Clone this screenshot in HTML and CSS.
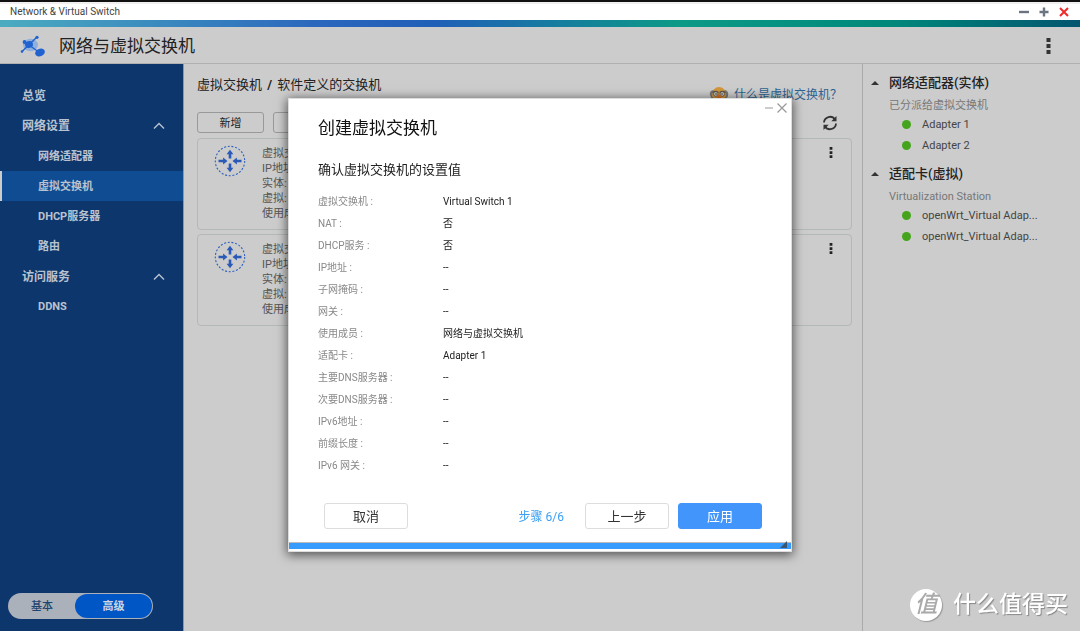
FILE: index.html
```html
<!DOCTYPE html>
<html lang="zh-CN">
<head>
<meta charset="utf-8">
<title>Network &amp; Virtual Switch</title>
<link rel="stylesheet" href="styles.css">
</head>
<body>
<svg class="defs" aria-hidden="true">
  <symbol id="switch" viewBox="0 0 32 32">
    <circle cx="16" cy="16" r="14.700" fill="none" stroke="#2d5fbe" stroke-width="1.100" stroke-dasharray="2 1.700"/>
    <g fill="#2a59b8">
      <path d="M16 4.800l3.400 4.400h-2.100v4.300h-2.600V9.200h-2.100z"/>
      <path d="M16 27.200l3.400-4.400h-2.100v-4.300h-2.600v4.300h-2.100z"/>
      <path d="M13.500 16l-4.400-3.400v2.100H4.500v2.600h4.600v2.100z"/>
      <path d="M18.500 16l4.400-3.400v2.100h4.600v2.600h-4.600v2.100z"/>
    </g>
  </symbol>
  <symbol id="dots" viewBox="0 0 4 12">
    <path d="M.5 0h3v3h-3zM.5 4.500h3v3h-3zM.5 9h3v3h-3z" fill="currentColor"/>
  </symbol>
  <symbol id="chevron" viewBox="0 0 12 8">
    <path d="M1 6.500l5-5 5 5" fill="none" stroke="currentColor" stroke-width="1.400"/>
  </symbol>
</svg>
<div class="window">
  <header class="titlebar">
    <span>Network &amp; Virtual Switch</span>
    <div class="winctl">
      <button type="button" aria-label="最小化"><svg width="12" height="12" viewBox="0 0 12 12"><path d="M1 6h10" stroke="#6b7480" stroke-width="2.400"/></svg></button>
      <button type="button" aria-label="最大化"><svg width="12" height="12" viewBox="0 0 12 12"><path d="M1.500 6h9M6 1.500v9" stroke="#6b7480" stroke-width="2.400"/></svg></button>
      <button type="button" aria-label="关闭"><svg width="12" height="12" viewBox="0 0 12 12"><path d="M2 2l8 8M10 2l-8 8" stroke="#ee2a2a" stroke-width="2"/></svg></button>
    </div>
  </header>
  <div class="stripe"></div>
  <div class="appbar">
    <svg width="26" height="24" viewBox="0 0 26 24">
      <ellipse cx="10.500" cy="11" rx="7.500" ry="6.200" fill="#8fb0dc"/>
      <path d="M1.500 18L17 3M5 8l15 11" stroke="#1f62d0" stroke-width="1.400"/>
      <ellipse cx="9" cy="10.500" rx="4" ry="3.400" fill="#1f62d0" transform="rotate(-20 9 10.500)"/>
      <circle cx="17" cy="3.300" r="1.600" fill="#1f62d0"/><circle cx="4.500" cy="8" r="1.900" fill="#1f62d0"/><circle cx="2" cy="17.500" r="1.300" fill="#1f62d0"/>
      <ellipse cx="20" cy="18.500" rx="5" ry="3.800" fill="#1f62d0" transform="rotate(-20 20 18.500)"/>
    </svg>
    <h1>网络与虚拟交换机</h1>
    <button type="button" class="more" aria-label="更多"><svg width="5" height="16" viewBox="0 0 5 16"><path d="M.5 0h4v4h-4zM.5 6h4v4h-4zM.5 12h4v4h-4z" fill="#333"/></svg></button>
  </div>
  <div class="body">
    <nav class="sidebar">
      <a class="top" href="#">总览</a>
      <a class="top" href="#">网络设置<svg width="12" height="8"><use href="#chevron"/></svg></a>
      <div class="sub">
        <a href="#">网络适配器</a>
        <a href="#" class="active">虚拟交换机</a>
        <a href="#">DHCP服务器</a>
        <a href="#">路由</a>
      </div>
      <a class="top" href="#">访问服务<svg width="12" height="8"><use href="#chevron"/></svg></a>
      <div class="sub"><a href="#">DDNS</a></div>
      <div class="mode">
        <button type="button">基本</button>
        <button type="button" class="on">高级</button>
      </div>
    </nav>
    <main class="main">
      <div class="heading">
        <h2>虚拟交换机 <b>/</b> 软件定义的交换机</h2>
        <a class="help" href="#">
          <svg width="20" height="18" viewBox="0 0 20 18">
            <path d="M1 9Q0 5 4 4l12 0q4 1 3 6l-2 4H3z" fill="#777"/>
            <path d="M4 5Q6 1 10 1t6 4l1 5-3 5H6L3 10z" fill="#d2973b"/>
            <path d="M3.500 6.500q3-2 6 0M10.500 6.500q3-2 6 0" fill="none" stroke="#555" stroke-width="1.300"/>
            <circle cx="6.800" cy="8" r="2.200" fill="#ddd" stroke="#544833" stroke-width=".8"/><circle cx="13.200" cy="8" r="2.200" fill="#ddd" stroke="#544833" stroke-width=".8"/>
            <circle cx="7" cy="8" r=".8" fill="#222"/><circle cx="13" cy="8" r=".8" fill="#222"/>
            <path d="M8.500 9h3l.5 3H8z" fill="#df6b22"/><path d="M5 14q5-4 10 0v2H5z" fill="#655943"/>
          </svg>
          <span>什么是虚拟交换机？</span>
        </a>
      </div>
      <div class="tools">
        <button type="button" class="btn">新增</button>
        <button type="button" class="btn">高级</button>
        <button type="button" class="refresh" aria-label="刷新"><svg width="16" height="16" viewBox="0 0 16 16"><path d="M2 7.500A6 6 0 0 1 13 4.500M14 8.500A6 6 0 0 1 3 11.500" fill="none" stroke="#333" stroke-width="1.800"/><path d="M14.500 1v5.300H9.300zM1.500 15V9.700h5.200z" fill="#333"/></svg></button>
      </div>
      <section class="card">
        <svg width="32" height="32"><use href="#switch"/></svg>
        <div class="info"><p>虚拟交换机</p><p>IP地址:</p><p>实体:</p><p>虚拟:</p><p>使用成员</p></div>
        <button type="button" aria-label="更多"><svg width="4" height="11"><use href="#dots"/></svg></button>
      </section>
      <section class="card">
        <svg width="32" height="32"><use href="#switch"/></svg>
        <div class="info"><p>虚拟交换机</p><p>IP地址:</p><p>实体:</p><p>虚拟:</p><p>使用成员</p></div>
        <button type="button" aria-label="更多"><svg width="4" height="11"><use href="#dots"/></svg></button>
      </section>
    </main>
    <aside class="aside">
      <h3>网络适配器(实体)</h3>
      <p>已分派给虚拟交换机</p>
      <ul><li>Adapter 1</li><li>Adapter 2</li></ul>
      <h3>适配卡(虚拟)</h3>
      <p>Virtualization Station</p>
      <ul><li>openWrt_Virtual Adap...</li><li>openWrt_Virtual Adap...</li></ul>
    </aside>
  </div>
</div>
<div class="overlay">
  <div class="dialog" role="dialog" aria-labelledby="dlg">
    <div class="dlgctl">
      <button type="button" aria-label="最小化"><svg width="10" height="12" viewBox="0 0 10 12"><path d="M1 6h8" stroke="#999"/></svg></button>
      <button type="button" aria-label="关闭"><svg width="12" height="12" viewBox="0 0 12 12"><path d="M1.500 1.500l9 9M10.500 1.500l-9 9" stroke="#999" stroke-width="1.200"/></svg></button>
    </div>
    <div class="content">
      <h2 id="dlg">创建虚拟交换机</h2>
      <h3>确认虚拟交换机的设置值</h3>
      <dl>
        <dt>虚拟交换机 :</dt><dd>Virtual Switch 1</dd>
        <dt>NAT :</dt><dd>否</dd>
        <dt>DHCP服务 :</dt><dd>否</dd>
        <dt>IP地址 :</dt><dd>--</dd>
        <dt>子网掩码 :</dt><dd>--</dd>
        <dt>网关 :</dt><dd>--</dd>
        <dt>使用成员 :</dt><dd>网络与虚拟交换机</dd>
        <dt>适配卡 :</dt><dd>Adapter 1</dd>
        <dt>主要DNS服务器 :</dt><dd>--</dd>
        <dt>次要DNS服务器 :</dt><dd>--</dd>
        <dt>IPv6地址 :</dt><dd>--</dd>
        <dt>前缀长度 :</dt><dd>--</dd>
        <dt>IPv6 网关 :</dt><dd>--</dd>
      </dl>
    </div>
    <div class="actions">
      <button type="button">取消</button>
      <span>步骤 6/6</span>
      <button type="button">上一步</button>
      <button type="button" class="primary">应用</button>
    </div>
    <div class="bar"><svg width="7" height="7" viewBox="0 0 7 7"><path d="M7 0v7H0z" fill="#3c5870"/></svg></div>
  </div>
</div>
<div class="mark"><span class="seal">值</span><span>什么值得买</span></div>
</body>
</html>
```
FILE: styles.css
```css
* { box-sizing: border-box; margin: 0; padding: 0; }
body { font: 11px/16px Roboto, "Noto Sans CJK SC", sans-serif; color: #222; background: #ccc; overflow: hidden; }
button { font: inherit; color: inherit; background: none; border: 0; }
a { color: inherit; text-decoration: none; }
svg { display: block; flex: none; }
.defs { position: absolute; width: 0; height: 0; }
.window { display: flex; flex-direction: column; height: 100vh; border-top: 2px solid #111; }
.titlebar { display: flex; align-items: center; justify-content: space-between; height: 18px; padding: 0 10px; background: #fff; border-top: 2px solid #f0eeee; color: #444; font-size: 10px; }
.winctl { display: flex; gap: 8px; }
.stripe { height: 7px; background: linear-gradient(90deg, #4bacc0, #2a66bd 30%, #205fb8 40%, #0c9a86 63%, #00897b 82%, #03566f); }
.appbar { display: flex; align-items: center; height: 37px; padding: 1px 29px 0 20px; border-bottom: 1px solid #b0b0b0; }
.appbar h1 { padding-top: 1px; font-size: 17px; line-height: 24px; font-weight: 400; margin-left: 13px; }
.more { margin-left: auto; }
.body { display: flex; flex: 1; min-height: 0; }
.sidebar { display: flex; flex-direction: column; width: 184px; flex: none; padding: 17px 0 12px; background: #0d366c; color: #b9c3d0; font-weight: 700; border-right: 1px solid #8d97a5; }
.sidebar a { display: flex; align-items: center; justify-content: space-between; height: 30px; }
.sidebar .top { padding: 0 18px 0 22px; font-size: 12px; }
.sub a { padding: 2px 0 0 38px; }
.sub .active { background: #104c92; border-left: 2px solid #ccc; padding-left: 36px; }
.sub + .top { padding-top: 1px; }
.mode { display: flex; width: 145px; height: 26px; margin: auto 0 0 8px; padding: 1px; border-radius: 13px; background: #abb1ba; color: #20446f; }
.mode button { flex: 1; padding-top: 2px; font-weight: 500; }
.mode .on { flex: 0 0 77px; background: #0056c5; color: #ccd6e4; border-radius: 12px; font-weight: 700; }
.main { flex: 1; min-width: 0; padding: 11px 10px 0 13px; }
.heading { display: flex; justify-content: space-between; padding-right: 10px; }
.heading h2 { font-size: 13px; line-height: 20px; font-weight: 400; }
.heading b { margin: 0 2px; font-weight: 700; }
.help { display: flex; align-items: center; gap: 5px; height: 20px; margin-top: 10px; font-size: 12px; color: #2c6390; }
.tools { display: flex; align-items: center; gap: 9px; margin-top: 7px; }
.btn { width: 67px; height: 21px; padding-top: 1px; border: 1px solid #999; border-radius: 3px; line-height: 20px; }
.refresh { margin-left: auto; padding-right: 14px; }
.card { display: flex; height: 92px; margin-top: 5px; padding: 6px 18px 0 16px; border: 1px solid #b3b8b9; border-radius: 4px; }
.card + .card { margin-top: 4px; }
.card .info { flex: 1; margin-left: 16px; padding-top: 1px; line-height: 15px; color: #555; }
.card button { align-self: flex-start; padding-top: 2px; }
.aside { width: 218px; flex: none; padding: 9px 8px; border-left: 1px solid #aaa; color: #444; }
.aside h3 { display: flex; align-items: center; gap: 10px; font-size: 13px; line-height: 20px; font-weight: 500; color: #222; }
.aside h3::before { content: ""; border: 4px solid transparent; border-top: 0; border-bottom-color: #333; }
.aside p { padding: 5px 0 0 18px; color: #777; line-height: 16px; }
.aside ul { list-style: none; padding-bottom: 8px; }
.aside li { display: flex; align-items: center; gap: 11px; height: 21px; padding-left: 31px; }
.aside li::before { content: ""; width: 9px; height: 9px; border-radius: 50%; background: #44a41c; }
.overlay { position: fixed; inset: 0; display: flex; align-items: center; justify-content: center; padding-top: 19px; }
.dialog { position: relative; width: 504px; background: #fff; box-shadow: 0 2px 10px 1px rgba(0,0,0,.6); border: 1px solid #ddd; }
.dlgctl { position: absolute; top: 3px; right: 3px; display: flex; gap: 2px; }
.content { padding: 17px 29px 0; }
.content h2 { font-size: 17px; line-height: 24px; font-weight: 400; color: #111; }
.content h3 { margin-top: 20px; font-size: 13px; line-height: 20px; font-weight: 400; }
.content dl { display: grid; grid-template-columns: 125px 1fr; grid-auto-rows: 22px; margin-top: 11px; font-size: 10px; line-height: 22px; }
.content dt { color: #888; }
.actions { display: flex; align-items: center; padding: 26px 29px 13px 35px; font-size: 12px; }
.actions button { width: 84px; height: 26px; padding-top: 1px; border: 1px solid #ddd; border-radius: 3px; color: #333; font-size: 13px; line-height: 24px; }
.actions span { margin: 0 21px 0 auto; padding-top: 2px; color: #3a9ff5; }
.actions .primary { margin-left: 9px; background: #4295fa; border-color: #4295fa; color: #fff; }
.bar { display: flex; justify-content: flex-end; height: 7px; margin-bottom: 2px; padding-right: 4px; background: #389cff; border-top: 1px solid #bbb; }
.bar svg { margin-top: -2px; }
.mark { position: fixed; right: 12px; bottom: 10px; display: flex; align-items: center; gap: 11px; color: #fff; font-size: 23px; line-height: 32px; font-weight: 500; text-shadow: 1px 1px 1px #888; }
.seal { width: 32px; height: 32px; border-radius: 50%; background: #fff; color: #aaa; text-align: center; text-shadow: none; font-style: italic; box-shadow: 1px 1px 1px #999; }
```
